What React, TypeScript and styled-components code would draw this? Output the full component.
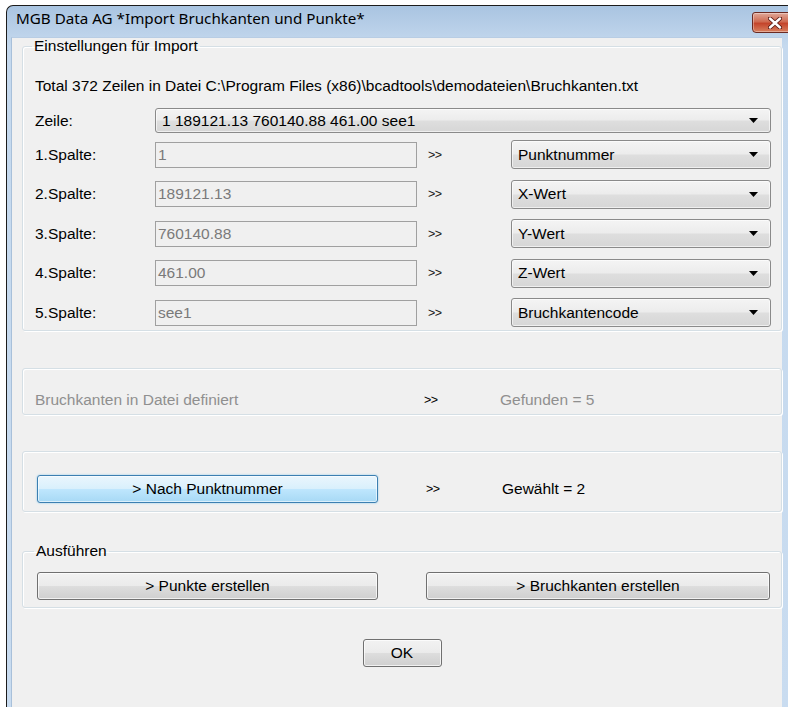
import React from "react";
import styled, {createGlobalStyle, css} from "styled-components";

const GlobalStyle = createGlobalStyle`
  html, body {
    margin: 0;
    padding: 0;
    background: #ffffff;
    overflow: hidden;
  }
  body {
    font-family: "Liberation Sans", Arial, sans-serif;
    font-size: 15.5px;
    color: #000;
  }
`;

const columns = [
  {label: "1.Spalte:", value: "1", target: "Punktnummer"},
  {label: "2.Spalte:", value: "189121.13", target: "X-Wert"},
  {label: "3.Spalte:", value: "760140.88", target: "Y-Wert"},
  {label: "4.Spalte:", value: "461.00", target: "Z-Wert"},
  {label: "5.Spalte:", value: "see1", target: "Bruchkantencode"},
];

const Arrow = () => (
  <svg width="9" height="5" viewBox="0 0 9 5">
    <path d="M0 0 H9 L4.5 5 Z" fill="#000" />
  </svg>
);

const CloseGlyph = () => (
  <svg width="14" height="12" viewBox="0 0 14 12">
    <path d="M2 1.5 L12 10.5 M12 1.5 L2 10.5" stroke="#5a1a14" strokeWidth="4.2" strokeLinecap="round" />
    <path d="M2 1.5 L12 10.5 M12 1.5 L2 10.5" stroke="#ffffff" strokeWidth="2.4" strokeLinecap="round" />
  </svg>
);

export default function App() {
  return (
    <>
      <GlobalStyle />
      <Window>
        <TitleBar>
          <Title>MGB Data AG *Import Bruchkanten und Punkte*</Title>
          <CloseButton>
            <CloseGlyph />
          </CloseButton>
        </TitleBar>

        <Client>
          <Group $pad="0 12px 3px">
            <Legend>Einstellungen für Import</Legend>
            <Info>
              Total 372 Zeilen in Datei C:\Program Files (x86)\bcadtools\demodateien\Bruchkanten.txt
            </Info>

            <LineRow>
              <span>Zeile:</span>
              <Combo $wide>
                <span>1 189121.13 760140.88 461.00 see1</span>
                <Arrow />
              </Combo>
            </LineRow>

            {columns.map((c) => (
              <ColumnRow key={c.label}>
                <span>{c.label}</span>
                <ReadOnlyBox>{c.value}</ReadOnlyBox>
                <Chevrons>&gt;&gt;</Chevrons>
                <Combo>
                  <span>{c.target}</span>
                  <Arrow />
                </Combo>
              </ColumnRow>
            ))}
          </Group>

          <Group $top={37} $pad="23px 12px 6px">
            <ResultRow $muted>
              <span>Bruchkanten in Datei definiert</span>
              <Chevrons>&gt;&gt;</Chevrons>
              <span>Gefunden = 5</span>
            </ResultRow>
          </Group>

          <Group $top={36} $pad="23px 14px 8px">
            <ResultRow>
              <Button $focused>&gt; Nach Punktnummer</Button>
              <Chevrons>&gt;&gt;</Chevrons>
              <span>Gewählt = 2</span>
            </ResultRow>
          </Group>

          <Group $top={31} $pad="0 11px 7px 14px">
            <Legend>Ausführen</Legend>
            <ActionRow>
              <Button>&gt; Punkte erstellen</Button>
              <Button>&gt; Bruchkanten erstellen</Button>
            </ActionRow>
          </Group>

          <Footer>
            <OkButton>OK</OkButton>
          </Footer>
        </Client>
      </Window>
    </>
  );
}

const Window = styled.div`
  margin: 5px 0 0 6px;
  width: 800px;
  height: 720px;
  display: flex;
  flex-direction: column;
  border: 1px solid #1c1c1c;
  border-right: none;
  border-bottom: none;
  border-radius: 7px 7px 0 0;
  background: linear-gradient(#a9c4e1, #c5d9ee 40px, #c9dcf0);
  overflow: hidden;
`;

const TitleBar = styled.div`
  height: 31px;
  flex-shrink: 0;
  display: flex;
  align-items: flex-start;
  justify-content: space-between;
`;

const Title = styled.div`
  margin: 2px 0 0 9px;
  font-family: "Noto Sans", "Open Sans", sans-serif;
  font-size: 15.2px;
  color: #000;
`;

const CloseButton = styled.div`
  margin: 6px 10px 0 0;
  width: 43px;
  height: 19px;
  display: flex;
  align-items: center;
  justify-content: center;
  border: 1px solid #6b2a22;
  border-radius: 3px 3px 4px 4px;
  background: linear-gradient(#e0a899, #cf6b52 45%, #c4452c 55%, #d8805f);
  box-shadow: inset 0 0 0 1px rgba(255, 255, 255, 0.35);
`;

const Client = styled.div`
  flex: 1;
  margin-left: 4px;
  border-left: 1px solid #a8c0da;
  border-top: 1px solid #b8cde4;
  background: #f0f0f0;
  padding: 0 0 0 10px;
  width: 760px;
`;

const Group = styled.fieldset<{$top?: number; $pad?: string}>`
  margin: ${({$top}) => $top ?? 0}px 0 0;
  padding: ${({$pad}) => $pad ?? "0 12px 1px"};
  border: 1px solid #d5dfe5;
  border-radius: 3px;
  box-shadow: inset 1px 1px 0 #fff, 1px 1px 0 #fff;
  min-width: 0;
  box-sizing: border-box;
  width: 760px;
`;

const Legend = styled.legend`
  padding: 0 2px;
  margin-left: -3px;
  line-height: 16px;
  color: #000;
`;

const Info = styled.div`
  margin-top: 24px;
  line-height: 16px;
`;

const LineRow = styled.div`
  margin-top: 14px;
  display: grid;
  grid-template-columns: 120px 616px;
  align-items: center;
  height: 25px;
`;

const ColumnRow = styled.div`
  margin-top: 7px;
  display: grid;
  grid-template-columns: 120px 262px 94px 260px;
  align-items: center;
  height: 29px;

  & + & {
    margin-top: 10.5px;
  }
`;

const fieldText = css`
  box-sizing: border-box;
  display: flex;
  align-items: center;
`;

const ReadOnlyBox = styled.div`
  ${fieldText};
  height: 26px;
  padding: 0 2px;
  border: 1px solid #a0a0a0;
  background: #f0f0f0;
  color: #7a7a7a;
`;

const Combo = styled.div<{$wide?: boolean}>`
  ${fieldText};
  height: ${({$wide}) => ($wide ? 25 : 29)}px;
  justify-content: space-between;
  padding: 0 12px 0 6px;
  border: 1px solid #8a8a8a;
  border-radius: 3px;
  background: linear-gradient(#f4f4f4, #ececec 48%, #dedede 52%, #d6d6d6);
  box-shadow: inset 0 0 0 1px rgba(255, 255, 255, 0.6);
  color: #000;
`;

const Chevrons = styled.span`
  padding-left: 11px;
  font-size: 12.5px;
  letter-spacing: -0.5px;
  color: #1a1a1a;
`;

const ResultRow = styled.div<{$muted?: boolean}>`
  display: grid;
  grid-template-columns: 377px 88px auto;
  align-items: center;
  line-height: 16px;
  color: ${({$muted}) => ($muted ? "#8f8f8f" : "#000")};

  & > ${Chevrons} {
    color: #000;
    padding-left: 12px;
  }
`;

const Button = styled.button<{$focused?: boolean}>`
  font-family: "Liberation Sans", Arial, sans-serif;
  font-size: 15.5px;
  color: #000;
  width: 341px;
  height: 28px;
  padding: 0;
  border: 1px solid #707070;
  border-radius: 3px;
  background: linear-gradient(#f2f2f2, #ebebeb 48%, #dddddd 52%, #cfcfcf);
  box-shadow: inset 0 0 0 1px rgba(255, 255, 255, 0.7);

  ${({$focused}) =>
    $focused &&
    css`
      border-color: #3c7fb1;
      background: linear-gradient(#eaf6fd, #d9f0fc 48%, #bee6fd 52%, #a7d9f5);
      box-shadow: inset 0 0 0 1px rgba(255, 255, 255, 0.6), 0 0 2px #7ec4ea;
    `}
`;

const ActionRow = styled.div`
  margin-top: 13px;
  display: flex;
  justify-content: space-between;

  & > ${Button}:last-child {
    width: 344px;
  }
`;

const Footer = styled.div`
  margin-top: 31px;
  width: 760px;
  display: flex;
  justify-content: center;
`;

const OkButton = styled(Button)`
  width: 79px;
`;
